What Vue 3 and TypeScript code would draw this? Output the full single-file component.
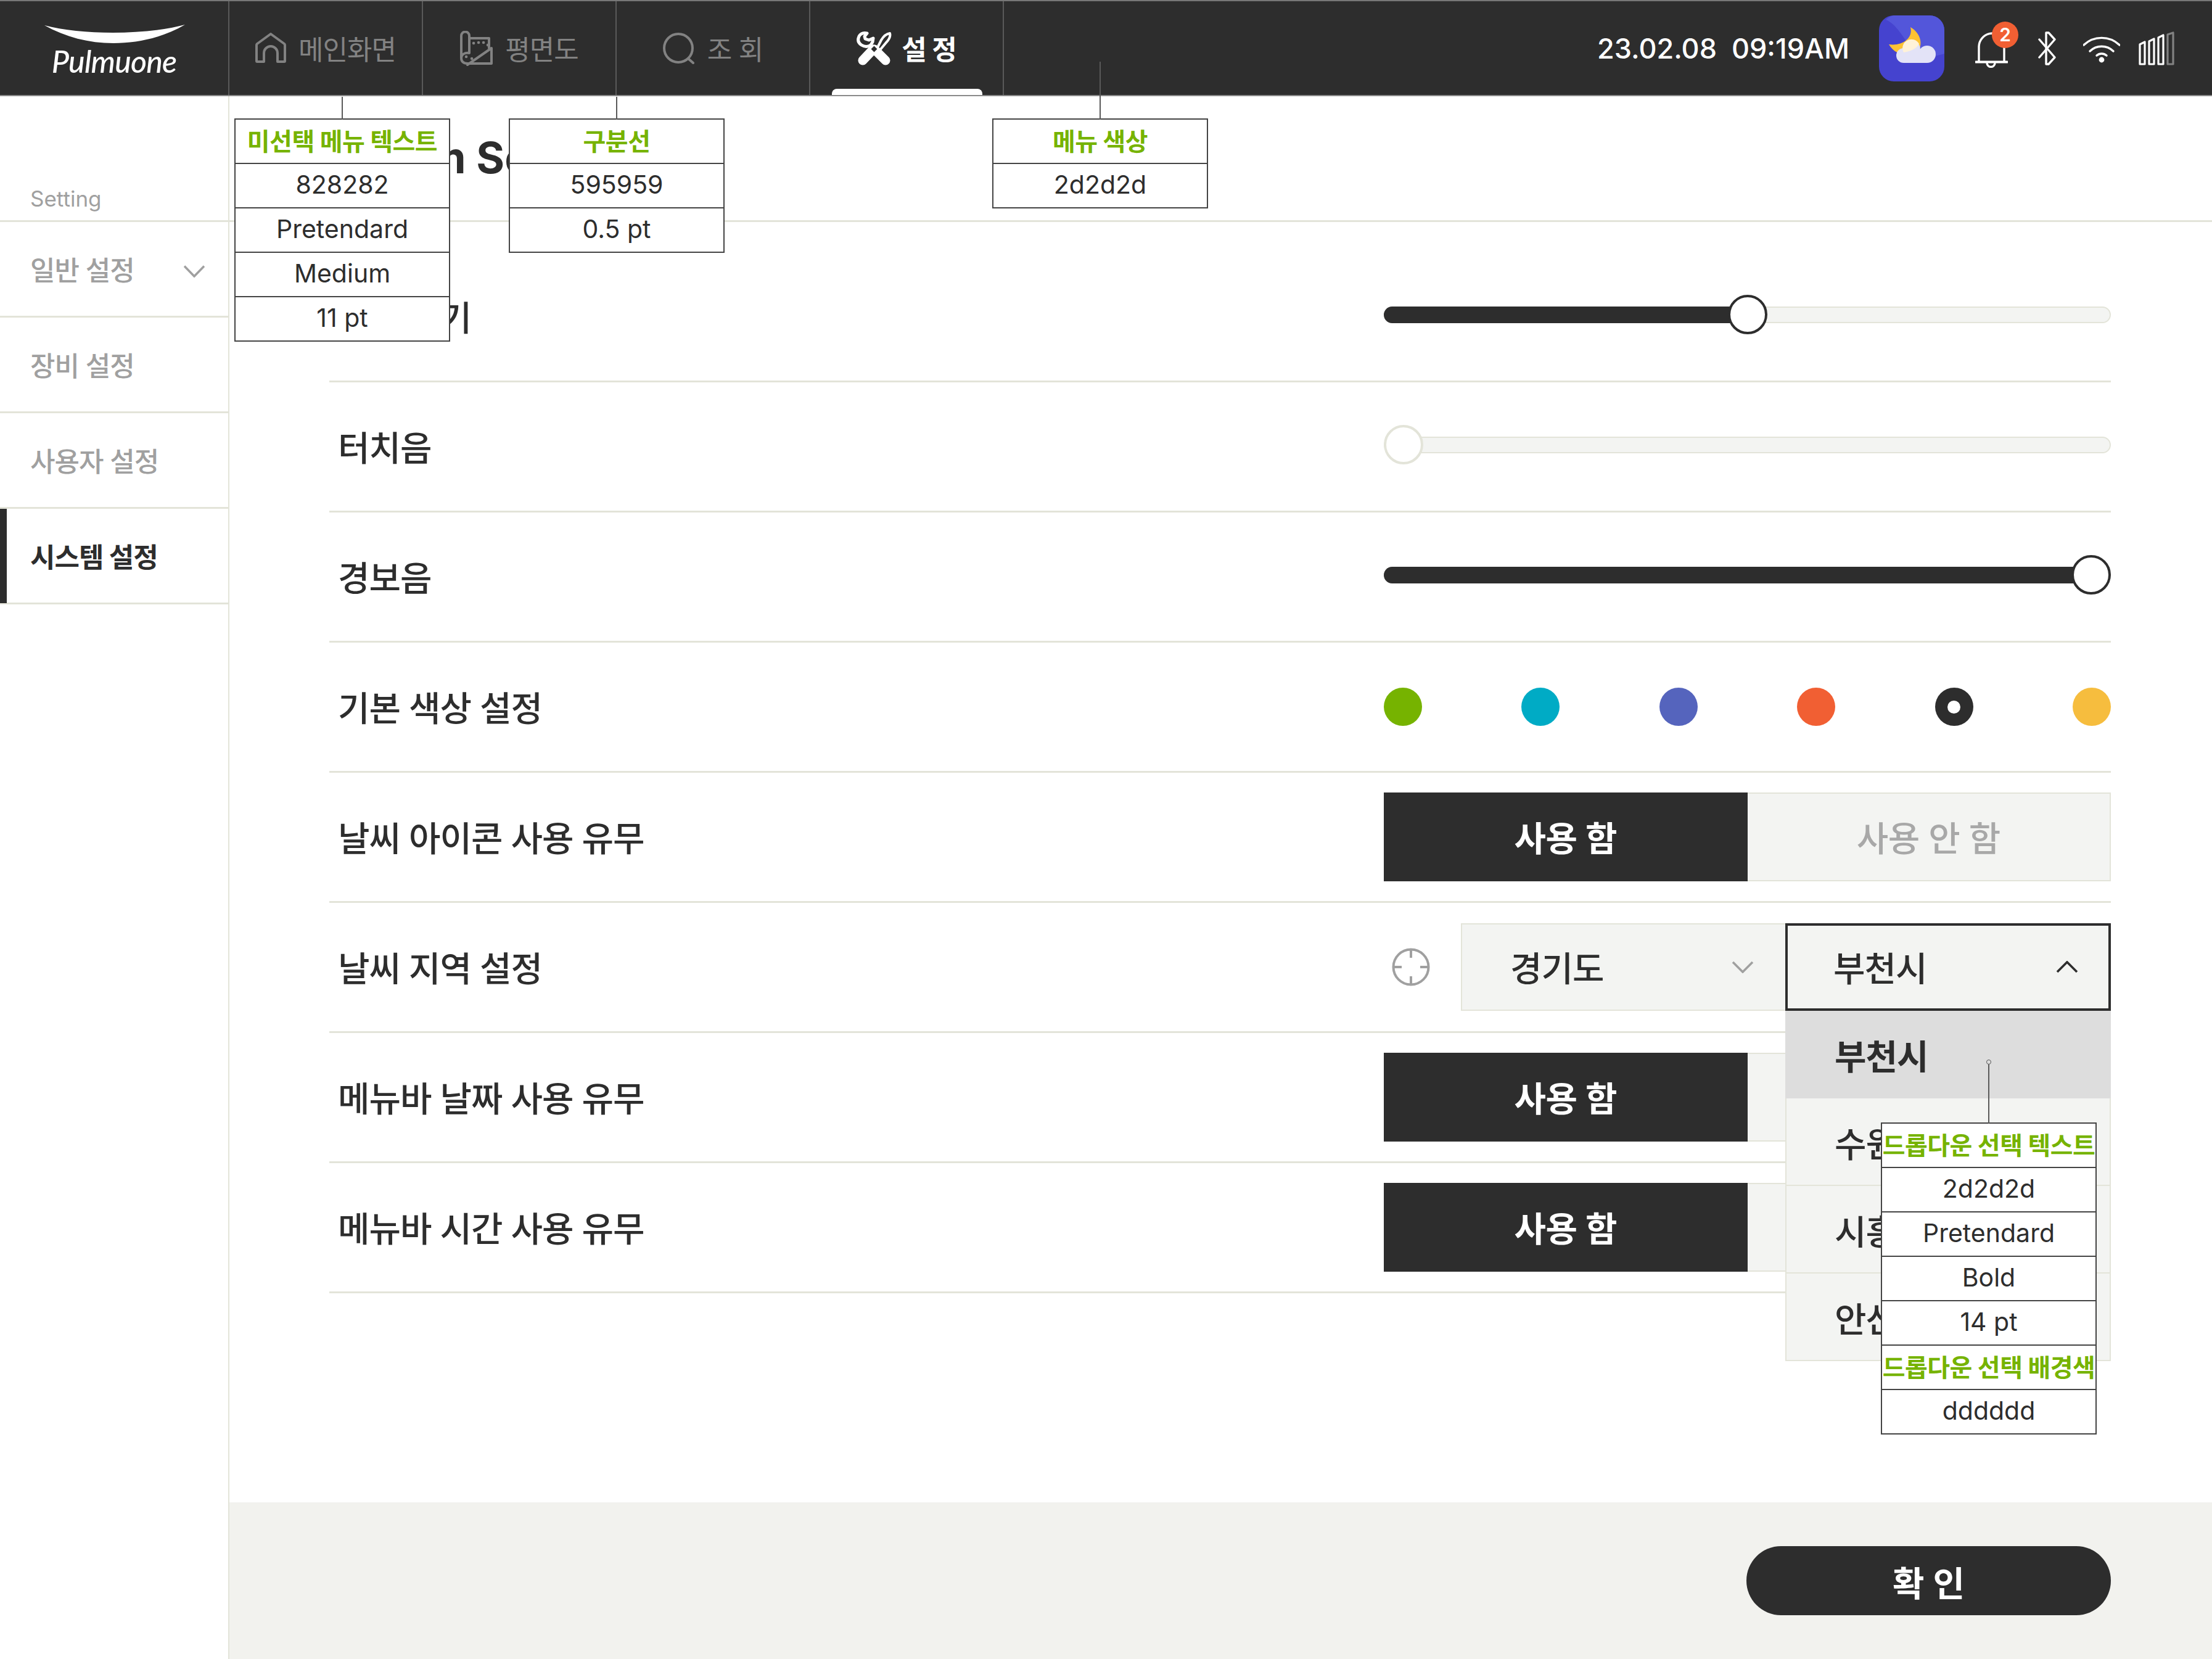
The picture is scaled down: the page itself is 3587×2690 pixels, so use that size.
<script setup lang="ts">
const notes1: string[] = ['828282', 'Pretendard', 'Medium', '11 pt']
const notes2: string[] = ['595959', '0.5 pt']
const sideItems = [
  { label: '일반 설정', chevron: true, active: false },
  { label: '장비 설정', chevron: false, active: false },
  { label: '사용자 설정', chevron: false, active: false },
  { label: '시스템 설정', chevron: false, active: true }
]
const sliders = [
  { label: '화면 밝기', pct: 50, on: true },
  { label: '터치음', pct: 0, on: false },
  { label: '경보음', pct: 100, on: true }
]
const swatches = [
  { color: '#76b300', sel: false },
  { color: '#00abc5', sel: false },
  { color: '#5564bd', sel: false },
  { color: '#f15f33', sel: false },
  { color: '#2d2d2d', sel: true },
  { color: '#f6bd3e', sel: false }
]
const cities = ['부천시', '수원시', '시흥시', '안산시']
const toggles = ['메뉴바 날짜 사용 유무', '메뉴바 시간 사용 유무']
function fill(pct: number): string {
  return `calc(32px + (100% - 64px) * ${pct / 100})`
}
</script>

<template>
  <div class="page">
    <header class="top">
      <div class="logo">
        <svg class="swoosh" width="228" height="31" viewBox="0 0 228 31">
          <path d="M0 1 C60 17 165 17 228 0 C190 22 150 30 112 30 C72 30 34 20 0 1 Z" fill="#fff" />
        </svg>
        <span class="brand">Pulmuone</span>
      </div>
      <div class="tab">
        <svg width="50" height="50" viewBox="0 0 50 50" fill="none" stroke="#828282" stroke-width="4" stroke-linejoin="round">
          <path d="M3 47 a1 1 0 0 1 -1-1 V20 a3 3 0 0 1 1-2 L25 2 L47 18 a3 3 0 0 1 1 2 V46 a1 1 0 0 1 -1 1 H36 V33 a11 11 0 0 0 -22 0 V47 Z" />
        </svg>
        <span>메인화면</span>
      </div>
      <div class="tab">
        <svg width="53" height="57" viewBox="0 0 53 57" fill="none" stroke="#828282" stroke-width="4" stroke-linecap="round" stroke-linejoin="round">
          <path d="M15 12 H47 V28" />
          <path d="M2 44 V8 a6 6 0 0 1 13 0 V36 C8 35 2 38 2 44 C2 50 6 53 12 53 H51 V28 L12 55" />
          <path d="M22 20 h.1 M30 19 h.1 M38 19 h.1 M45 23 h.1 M10 42 h.1 M19 45 h.1" stroke-width="4.5" />
        </svg>
        <span>평면도</span>
      </div>
      <div class="tab">
        <svg width="52" height="51" viewBox="0 0 52 51" fill="none" stroke="#828282" stroke-width="4" stroke-linecap="round">
          <circle cx="25" cy="25" r="23" />
          <path d="M41 42 L49 49" />
        </svg>
        <span>조 회</span>
      </div>
      <div class="tab tab-on">
        <svg width="57" height="55" viewBox="0 0 57 55" fill="none" stroke="#fff" stroke-linejoin="round">
          <path d="M17 3 Q8 1 4 8 Q0 17 8 22 Q16 27 23 22 L26 17 L27 11 L20 14 L14 12 L13 8 Z" stroke-width="5" />
          <path d="M33 28 L40 14 Q46 4 54 3 Q56 10 48 18 L38 30 Z" stroke-width="4" />
          <path d="M10 47 L27 29 M47 47 L29 29" stroke-width="15" stroke-linecap="round" />
          <rect x="25" y="25" width="7" height="7" fill="#2d2d2d" stroke="none" transform="rotate(45 28.5 28.5)" />
        </svg>
        <span>설 정</span>
        <i class="tab-mark"></i>
      </div>
      <div class="status">
        <span class="clock">23.02.08 &nbsp;09:19AM</span>
        <svg class="s-weather" width="106" height="107" viewBox="0 0 106 107">
          <rect width="106" height="107" rx="24" fill="#4543cf" />
          <path d="M11 7 C30 14 44 44 61 67 C76 70 92 66 106 62 V24 A24 24 0 0 0 82 0 H24 A24 24 0 0 0 11 7 Z" fill="#5356da" />
          <path d="M51 19 C70 30 72 52 60 60 C46 68 26 64 16 47 C36 50 56 38 51 19 Z" fill="#fdc233" />
          <g fill="#e3e3f7">
            <circle cx="40" cy="65" r="12" />
            <circle cx="53" cy="55" r="14" />
            <circle cx="78" cy="63" r="14" />
            <rect x="40" y="55" width="38" height="22" />
          </g>
          <path d="M40 60 A14 14 0 0 1 65 46 C62 52 54 58 40 60 Z" fill="#fff2d8" />
        </svg>
        <div class="s-bell">
          <svg width="53" height="59" viewBox="0 0 53 59" fill="none" stroke="#fff" stroke-width="3.4" stroke-linecap="round">
            <path d="M6 49 V24 a22 22 0 0 1 41 -10 V49" />
            <path d="M1 49.5 H52" stroke-width="4" />
            <path d="M19 51 a6.5 6.5 0 0 0 13 0" />
          </svg>
          <b class="badge">2</b>
        </div>
        <svg class="s-bt" width="29" height="55" viewBox="0 0 29 55" fill="none" stroke="#fff" stroke-width="3.4" stroke-linejoin="round" stroke-linecap="round">
          <path d="M2 13 L27 42 L17 53 H13 V2 H17 L27 13 L2 42" />
        </svg>
        <svg class="s-wifi" width="60" height="43" viewBox="0 0 60 43" fill="none" stroke="#fff" stroke-width="3.4" stroke-linecap="round">
          <path d="M1 14 A42 42 0 0 1 59 14" />
          <path d="M11 24 A27 27 0 0 1 49 24" />
          <path d="M22 31 A12 12 0 0 1 38 31" />
          <circle cx="30" cy="38" r="4.4" fill="#fff" stroke="none" />
        </svg>
        <svg class="s-signal" width="58" height="55" viewBox="0 0 58 55" fill="none" stroke="#fff" stroke-width="3.2" stroke-linejoin="round">
          <path d="M2 53 V21 L10 17 V53 Z" />
          <path d="M17 53 V16 L25 12 V53 Z" />
          <path d="M32 53 V10 L40 6 V53 Z" />
          <path d="M47 53 V5 L56 2 V53 Z" stroke="#828282" />
        </svg>
      </div>
    </header>

    <div class="body">
      <aside class="side">
        <div class="side-head">Setting</div>
        <div v-for="item in sideItems" :key="item.label" class="side-item" :class="{ 'side-on': item.active }">
          <span>{{ item.label }}</span>
          <svg v-if="item.chevron" class="side-chev" width="34" height="20" viewBox="0 0 34 20" fill="none" stroke="#a0a0a0" stroke-width="3.6">
            <path d="M1 1.5 L17 18 L33 1.5" />
          </svg>
        </div>
      </aside>

      <main class="main">
        <div class="main-head"><h1 class="title">System Setting</h1></div>
        <section class="rows">
          <div v-for="s in sliders" :key="s.label" class="row">
            <span class="label">{{ s.label }}</span>
            <div class="control slider">
              <div class="track"></div>
              <div v-if="s.on" class="track-fill" :style="{ width: fill(s.pct) }"></div>
              <div class="thumb" :class="{ 'thumb-off': !s.on }" :style="{ left: `calc((100% - 64px) * ${s.pct / 100})` }"></div>
            </div>
          </div>

          <div class="row">
            <span class="label">기본 색상 설정</span>
            <div class="control swatches">
              <span v-for="c in swatches" :key="c.color" class="swatch" :style="{ background: c.color }">
                <i v-if="c.sel" class="swatch-dot"></i>
              </span>
            </div>
          </div>

          <div class="row">
            <span class="label">날씨 아이콘 사용 유무</span>
            <div class="control seg">
              <div class="seg-on">사용 함</div>
              <div class="seg-off">사용 안 함</div>
            </div>
          </div>

          <div class="row row-top">
            <span class="label">날씨 지역 설정</span>
            <div class="control region">
              <svg class="locate" width="62" height="62" viewBox="0 0 62 62" fill="none" stroke="#a0a0a0" stroke-width="4">
                <circle cx="31" cy="31" r="28.5" />
                <path d="M31 2 V16 M31 46 V60 M2 31 H16 M46 31 H60" />
              </svg>
              <div class="select select-1">
                <span class="sel-text">경기도</span>
                <svg width="36" height="20" viewBox="0 0 36 20" fill="none" stroke="#a0a0a0" stroke-width="3.6"><path d="M2 2 L18 18 L34 2" /></svg>
              </div>
              <div class="select select-2">
                <span class="sel-text">부천시</span>
                <svg width="36" height="20" viewBox="0 0 36 20" fill="none" stroke="#2d2d2d" stroke-width="3.6"><path d="M2 18 L18 2 L34 18" /></svg>
                <ul class="menu">
                  <li v-for="(c, i) in cities" :key="c" class="menu-item" :class="{ 'menu-sel': i === 0 }">{{ c }}</li>
                </ul>
              </div>
            </div>
          </div>

          <div v-for="t in toggles" :key="t" class="row">
            <span class="label">{{ t }}</span>
            <div class="control seg">
              <div class="seg-on">사용 함</div>
              <div class="seg-off">사용 안 함</div>
            </div>
          </div>
        </section>

        <footer class="foot">
          <button class="confirm" type="button">확 인</button>
        </footer>
      </main>
    </div>

    <div class="note note-a">
      <i class="lead lead-a"></i>
      <div class="n-row n-title">미선택 메뉴 텍스트</div>
      <div v-for="n in notes1" :key="n" class="n-row">{{ n }}</div>
    </div>
    <div class="note note-b">
      <i class="lead lead-b"></i>
      <div class="n-row n-title">구분선</div>
      <div v-for="n in notes2" :key="n" class="n-row">{{ n }}</div>
    </div>
    <div class="note note-c">
      <i class="lead lead-c"></i>
      <div class="n-row n-title">메뉴 색상</div>
      <div class="n-row">2d2d2d</div>
    </div>
    <div class="note note-d">
      <i class="lead lead-d"></i>
      <i class="pin"></i>
      <div class="n-row n-title">드롭다운 선택 텍스트</div>
      <div class="n-row">2d2d2d</div>
      <div class="n-row">Pretendard</div>
      <div class="n-row">Bold</div>
      <div class="n-row">14 pt</div>
      <div class="n-row n-title">드롭다운 선택 배경색</div>
      <div class="n-row">dddddd</div>
    </div>
  </div>
</template>

<style>
html, body { margin: 0; background: #fff; }
</style>

<style scoped>
.page {
  position: relative;
  width: 3587px;
  height: 2690px;
  display: flex;
  flex-direction: column;
  overflow: hidden;
  background: #fff;
  color: #2d2d2d;
  font-family: Inter, "Noto Sans CJK KR", sans-serif;
}
.top {
  flex: none;
  height: 156px;
  box-sizing: border-box;
  display: flex;
  background: #2d2d2d;
  border-top: 2px solid #777;
  border-bottom: 2px solid #8a8a8a;
}
.logo {
  flex: none;
  width: 372px;
  box-sizing: border-box;
  border-right: 2px solid #595959;
  display: flex;
  flex-direction: column;
  align-items: center;
  padding-top: 38px;
}
.swoosh { display: block; margin-left: 1px; }
.brand {
  margin-top: 1px;
  color: #fff;
  font-family: Lato, sans-serif;
  font-style: italic;
  font-weight: 500;
  font-size: 50px;
  line-height: 54px;
  letter-spacing: -0.8px;
}
.tab {
  position: relative;
  flex: none;
  width: 314px;
  box-sizing: border-box;
  border-right: 2px solid #595959;
  display: flex;
  align-items: center;
  justify-content: center;
  gap: 20px;
  color: #828282;
  font-size: 44px;
  letter-spacing: -1px;
  white-space: pre;
}
.tab-on { color: #fff; font-weight: 700; gap: 16px; }
.tab-mark {
  position: absolute;
  left: 35px;
  bottom: 0;
  width: 244px;
  height: 10px;
  background: #fff;
  border-radius: 8px 8px 0 0;
}
.status {
  flex: 1;
  display: flex;
  align-items: center;
  justify-content: flex-end;
  padding-right: 61px;
}
.clock {
  color: #fff;
  font-size: 45px;
  font-weight: 500;
  white-space: pre;
  margin-right: 48px;
}
.s-bell { position: relative; width: 53px; height: 59px; margin: 4px 49px 0 50px; }
.s-bell svg { display: block; }
.badge {
  position: absolute;
  left: 27px;
  top: -16px;
  width: 43px;
  height: 43px;
  border-radius: 50%;
  background: #f15f33;
  color: #fff;
  font-size: 30px;
  font-weight: 600;
  line-height: 43px;
  text-align: center;
}
.s-wifi { margin: 4px 0 0 44px; }
.s-signal { margin-left: 30px; }

.body { flex: 1; min-height: 0; display: flex; }
.side {
  flex: none;
  width: 372px;
  box-sizing: border-box;
  border-right: 2px solid #e3e4d9;
}
.side-head {
  height: 204px;
  box-sizing: border-box;
  border-bottom: 3px solid #e3e4d9;
  padding: 144px 0 0 49px;
  color: #a0a0a0;
  font-size: 35px;
  line-height: 44px;
}
.side-item {
  position: relative;
  height: 155px;
  box-sizing: border-box;
  border-bottom: 3px solid #e3e4d9;
  display: flex;
  align-items: center;
  padding-left: 49px;
  color: #a0a0a0;
  font-size: 44px;
  font-weight: 500;
  letter-spacing: -1px;
}
.side-chev { position: absolute; left: 298px; top: 70px; }
.side-on { color: #2d2d2d; font-weight: 700; }
.side-on::before {
  content: "";
  position: absolute;
  left: 0;
  top: 0;
  bottom: -1px;
  width: 11px;
  background: #2d2d2d;
}

.main { flex: 1; min-width: 0; display: flex; flex-direction: column; }
.main-head {
  flex: none;
  height: 204px;
  box-sizing: border-box;
  border-bottom: 3px solid #e3e4d9;
  padding: 58px 0 0 126px;
}
.title { margin: 0; font-size: 70px; line-height: 84px; font-weight: 700; white-space: nowrap; }
.rows { flex: none; padding: 49px 164px 0 162px; }
.row {
  height: 211px;
  box-sizing: border-box;
  border-bottom: 3px solid #e3e4d9;
  display: flex;
  align-items: center;
  justify-content: space-between;
}
.label { padding-left: 14px; margin-bottom: 4px; font-size: 56px; font-weight: 500; letter-spacing: -1px; }
.control { width: 1179px; flex: none; }
.slider { position: relative; height: 64px; margin-bottom: 6px; }
.track {
  position: absolute;
  left: 0;
  right: 0;
  top: 19px;
  height: 27px;
  box-sizing: border-box;
  background: #f3f4f2;
  border: 2px solid #e3e4d9;
  border-radius: 14px;
}
.track-fill {
  position: absolute;
  left: 0;
  top: 19px;
  height: 27px;
  background: #2d2d2d;
  border-radius: 14px;
}
.thumb {
  position: absolute;
  top: 0;
  width: 64px;
  height: 64px;
  box-sizing: border-box;
  background: #fff;
  border: 4px solid #2d2d2d;
  border-radius: 50%;
}
.thumb-off { border-color: #e3e4d9; }
.swatches { display: flex; justify-content: space-between; align-items: center; }
.swatch {
  width: 62px;
  height: 62px;
  border-radius: 50%;
  display: flex;
  align-items: center;
  justify-content: center;
}
.swatch-dot { width: 21px; height: 21px; border-radius: 50%; background: #fff; }
.seg { display: flex; height: 144px; font-size: 56px; letter-spacing: -0.5px; }
.seg-on, .seg-off {
  width: 50%;
  box-sizing: border-box;
  display: flex;
  align-items: center;
  justify-content: center;
  padding-bottom: 4px;
}
.seg-on { background: #2d2d2d; color: #fff; font-weight: 600; }
.seg-off { background: #f3f4f2; border: 2px solid #e3e4d9; border-left: 0; color: #a8a8a8; font-weight: 500; }
.region { display: flex; align-items: center; height: 142px; }
.locate { margin-left: 13px; margin-right: 50px; flex: none; }
.select {
  position: relative;
  height: 142px;
  box-sizing: border-box;
  background: #f3f4f2;
  display: flex;
  align-items: center;
  justify-content: space-between;
  font-size: 56px;
  font-weight: 500;
  letter-spacing: -1px;
}
.sel-text { margin-bottom: 4px; }
.select-1 { width: 526px; border: 2px solid #e3e4d9; border-right: 0; padding: 0 51px 0 78px; }
.select-2 { width: 528px; border: 4px solid #2d2d2d; padding: 0 49px 0 74px; }
.menu {
  position: absolute;
  z-index: 2;
  left: -4px;
  right: -4px;
  top: 138px;
  margin: 0;
  padding: 0;
  list-style: none;
}
.menu-item {
  height: 142px;
  box-sizing: border-box;
  display: flex;
  align-items: center;
  padding-left: 78px;
  background: #f3f4f2;
  border: 2px solid #e3e4d9;
  border-top: 0;
}
.menu-sel { background: #ddd; border-color: #ddd; font-weight: 700; }

.foot {
  flex: 1;
  background: #f2f2ee;
  margin-top: 339px;
  display: flex;
  align-items: center;
  justify-content: flex-end;
  padding-right: 164px;
}
.confirm {
  width: 591px;
  height: 112px;
  border: 0;
  border-radius: 56px;
  background: #2d2d2d;
  color: #fff;
  font-family: inherit;
  font-size: 56px;
  font-weight: 600;
}

.note {
  position: absolute;
  z-index: 5;
  top: 192px;
  box-sizing: border-box;
  width: 350px;
  background: #fff;
  border: 2px solid #444;
  border-bottom-width: 0;
  font-size: 41px;
}
.n-row {
  height: 72px;
  box-sizing: border-box;
  border-bottom: 2px solid #444;
  display: flex;
  align-items: center;
  justify-content: center;
  padding-bottom: 4px;
  white-space: nowrap;
}
.n-title { color: #76b300; font-weight: 700; font-size: 40px; letter-spacing: -0.5px; }
.note-a { left: 380px; }
.note-b { left: 825px; }
.note-c { left: 1609px; }
.note-d { left: 3050px; top: 1820px; }
.lead { position: absolute; width: 2px; background: #595959; left: 50%; margin-left: -1px; }
.lead-a { top: -37px; height: 37px; }
.lead-b { top: -37px; height: 37px; }
.lead-c { top: -94px; height: 94px; }
.lead-d { top: -96px; height: 96px; }
.pin {
  position: absolute;
  left: 50%;
  top: -104px;
  margin-left: -4px;
  width: 8px;
  height: 8px;
  box-sizing: border-box;
  border: 1.5px solid #595959;
  border-radius: 50%;
}
</style>
